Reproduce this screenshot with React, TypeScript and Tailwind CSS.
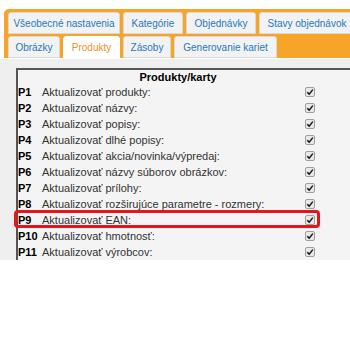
import React from 'react'

const rows = [
  ['P1', 'Aktualizovať produkty:'],
  ['P2', 'Aktualizovať názvy:'],
  ['P3', 'Aktualizovať popisy:'],
  ['P4', 'Aktualizovať dlhé popisy:'],
  ['P5', 'Aktualizovať akcia/novinka/výpredaj:'],
  ['P6', 'Aktualizovať názvy súborov obrázkov:'],
  ['P7', 'Aktualizovať prílohy:'],
  ['P8', 'Aktualizovať rozširujúce parametre - rozmery:'],
  ['P9', 'Aktualizovať EAN:'],
  ['P10', 'Aktualizovať hmotnosť:'],
  ['P11', 'Aktualizovať výrobcov:'],
]

function Tab({ label, w, active }: { label: string; w: string; active?: boolean }) {
  return (
    <div
      className={`${w} flex h-[22px] shrink-0 items-center justify-center whitespace-nowrap rounded-t-[3px] border text-[10px] ${
        active ? 'border-white bg-white text-[#f0901e]' : 'border-[#d8d8d8] bg-[#f2f2f2] text-[#2479bd]'
      }`}
    >
      {label}
    </div>
  )
}

function Check() {
  return (
    <span className="flex h-[10px] w-[10px] items-center justify-center rounded-[2px] border border-[#a0a0a0] bg-[#e8e8e8]">
      <svg viewBox="0 0 10 10" className="h-[8px] w-[8px]">
        <path d="M1.5 5.2 L4 7.6 L8.5 2" fill="none" stroke="#111" strokeWidth="1.8" />
      </svg>
    </span>
  )
}

export default function App() {
  return (
    <div className="h-[350px] w-[350px] overflow-hidden bg-white pt-[9px] pl-[4px] font-['Liberation_Sans',sans-serif]">
      <div className="flex flex-col gap-[2px] rounded-tl-[5px] bg-[#f7a528] pt-[3px] pl-[4px]">
        <div className="flex gap-[3px]">
          <Tab label="Všeobecné nastavenia" w="w-[112px]" />
          <Tab label="Kategórie" w="w-[60px]" />
          <Tab label="Objednávky" w="w-[70px]" />
          <Tab label="Stavy objednávok" w="w-[96px]" />
        </div>
        <div className="flex gap-[3px]">
          <Tab label="Obrázky" w="w-[52px]" />
          <Tab label="Produkty" w="w-[57px]" active />
          <Tab label="Zásoby" w="w-[48px]" />
          <Tab label="Generovanie kariet" w="w-[103px]" />
        </div>
      </div>
      <div className="-ml-[4px] h-[202px] border-t border-white bg-[#efefef] pt-[9px] pl-[16px]">
        <div className="relative h-[192px] border-t-2 border-l-2 border-[#555] bg-[#f4f4f4] text-[11px] text-[#333]">
          <div className="flex h-[14px] items-center justify-center pr-[12px] font-bold text-black">Produkty/karty</div>
          {rows.map(([id, text]) => (
            <div key={id} className="flex h-[16px] items-center">
              <span className="w-[24px] shrink-0 font-bold text-black">{id}</span>
              <span className="w-[263px] shrink-0">{text}</span>
              <Check />
            </div>
          ))}
          <div className="absolute top-[140px] -left-[4px] h-[18px] w-[306px] rounded-[4px] border-[3px] border-[#e8141b]" />
        </div>
      </div>
    </div>
  )
}
